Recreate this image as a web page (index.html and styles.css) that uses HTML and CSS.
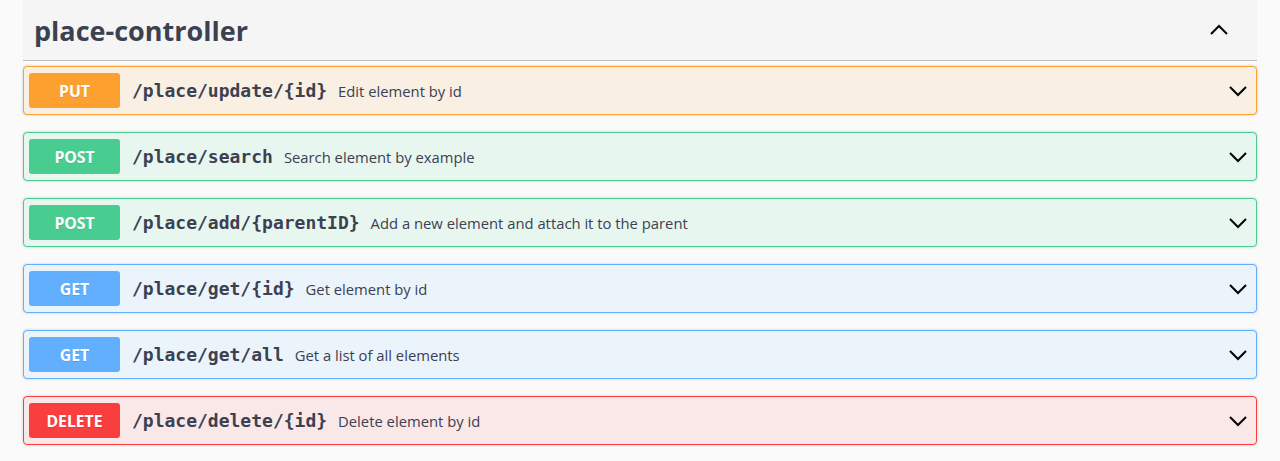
FILE: index.html
```html
<!DOCTYPE html>
<html>
<head>
<meta charset="utf-8">
<link rel="stylesheet" href="styles.css">
</head>
<body>
<div class="page">
  <section class="tag-section">
    <div class="tag-header">
      <h3 class="tag-title">place-controller</h3>
      <svg class="chev-up" width="20" height="20" viewBox="0 0 20 20"><path d="M2 14 L10 6 L18 14" fill="none" stroke="#000" stroke-width="2"/></svg>
    </div>
    <div class="ops">
      <div class="op op-put">
        <span class="method">PUT</span>
        <span class="path">/place/update/{id}</span>
        <span class="desc">Edit element by id</span>
        <svg class="chev" width="20" height="20" viewBox="0 0 20 20"><path d="M2 6 L10 14 L18 6" fill="none" stroke="#000" stroke-width="2"/></svg>
      </div>
      <div class="op op-post">
        <span class="method">POST</span>
        <span class="path">/place/search</span>
        <span class="desc">Search element by example</span>
        <svg class="chev" width="20" height="20" viewBox="0 0 20 20"><path d="M2 6 L10 14 L18 6" fill="none" stroke="#000" stroke-width="2"/></svg>
      </div>
      <div class="op op-post">
        <span class="method">POST</span>
        <span class="path">/place/add/{parentID}</span>
        <span class="desc">Add a new element and attach it to the parent</span>
        <svg class="chev" width="20" height="20" viewBox="0 0 20 20"><path d="M2 6 L10 14 L18 6" fill="none" stroke="#000" stroke-width="2"/></svg>
      </div>
      <div class="op op-get">
        <span class="method">GET</span>
        <span class="path">/place/get/{id}</span>
        <span class="desc">Get element by id</span>
        <svg class="chev" width="20" height="20" viewBox="0 0 20 20"><path d="M2 6 L10 14 L18 6" fill="none" stroke="#000" stroke-width="2"/></svg>
      </div>
      <div class="op op-get">
        <span class="method">GET</span>
        <span class="path">/place/get/all</span>
        <span class="desc">Get a list of all elements</span>
        <svg class="chev" width="20" height="20" viewBox="0 0 20 20"><path d="M2 6 L10 14 L18 6" fill="none" stroke="#000" stroke-width="2"/></svg>
      </div>
      <div class="op op-delete">
        <span class="method">DELETE</span>
        <span class="path">/place/delete/{id}</span>
        <span class="desc">Delete element by id</span>
        <svg class="chev" width="20" height="20" viewBox="0 0 20 20"><path d="M2 6 L10 14 L18 6" fill="none" stroke="#000" stroke-width="2"/></svg>
      </div>
    </div>
  </section>
</div>
</body>
</html>
```

FILE: styles.css
```css
html, body {
  margin: 0;
  padding: 0;
  background: #fafafa;
  font-family: "Open Sans", "Noto Sans", sans-serif;
  color: #3b4151;
}
.page {
  padding: 0 23px;
}
.tag-header {
  display: flex;
  align-items: center;
  height: 61px;
  background: #f5f5f5;
  border-bottom: 1px solid rgba(59, 65, 81, 0.3);
  padding: 0 28px 0 11px;
  box-sizing: border-box;
}
.tag-title {
  flex: 1;
  margin: 0;
  font-size: 27px;
  font-weight: 700;
  line-height: 1;
  color: #3b4151;
}
.chev-up {
  display: block;
}
.ops {
  padding-top: 5px;
}
.op {
  display: flex;
  align-items: center;
  height: 49px;
  box-sizing: border-box;
  border: 1px solid;
  border-radius: 4px;
  padding: 0 8px 0 5px;
  margin-bottom: 17px;
  box-shadow: 0 0 3px rgba(0, 0, 0, 0.19);
}
.method {
  width: 91px;
  height: 35px;
  flex: none;
  display: flex;
  align-items: center;
  justify-content: center;
  border-radius: 3px;
  color: #fff;
  font-size: 15.75px;
  font-weight: 700;
  text-shadow: 0 1px 0 rgba(0, 0, 0, 0.1);
}
.path {
  padding: 0 11px 0 12px;
  font-family: "DejaVu Sans Mono", monospace;
  font-size: 18px;
  font-weight: 700;
  color: #3b4151;
}
.desc {
  flex: 1;
  font-size: 14.8px;
  color: #3b4151;
}
.chev {
  display: block;
}
.op-put { background: #f9efe3; border-color: #fca130; }
.op-put .method { background: #fca130; }
.op-post { background: #e8f6f0; border-color: #49cc90; }
.op-post .method { background: #49cc90; }
.op-get { background: #ebf3fb; border-color: #61affe; }
.op-get .method { background: #61affe; }
.op-delete { background: #fae7e7; border-color: #f93e3e; }
.op-delete .method { background: #f93e3e; }
```
